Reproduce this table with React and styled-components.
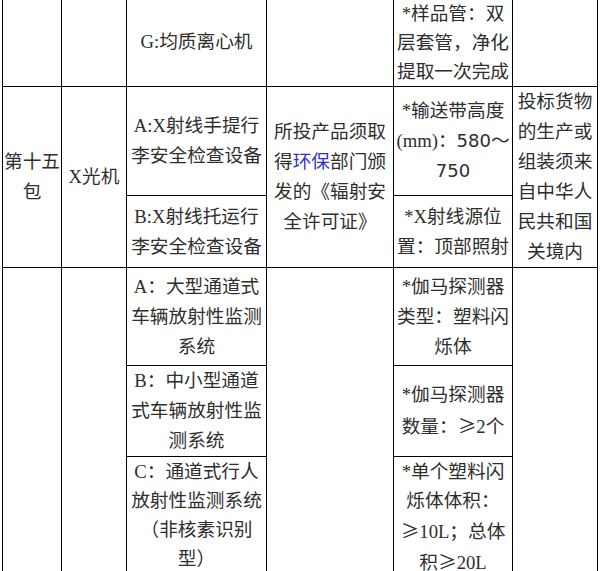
import React from 'react';
import styled, {createGlobalStyle} from 'styled-components';

const GlobalStyle = createGlobalStyle`
  html, body{
    margin: 0;
    padding: 0;
    background-color: #ffffff;
    overflow: hidden;
  }
`;

const Sheet = styled.table`
  border-collapse: collapse;
  table-layout: fixed;
  width: 596px;
  margin: -3px 0 0 2px;
  font-family: "Liberation Serif", "Noto Sans CJK SC", serif;
  font-size: 18.67px;
  line-height: 30px;
  color: #2e2e2e;
`;

const Row = styled.tr`
  height: ${p => p.h}px;
`;

const Cell = styled.td`
  border: 1px solid #000;
  padding: 0 1px;
  text-align: center;
  vertical-align: ${p => p.top ? 'top' : 'middle'};
  white-space: nowrap;
  line-height: ${p => p.lh || 30}px;
`;

const Accent = styled.span`
  color: #3232c8;
`;

const Num = styled.span`
  font-family: "DejaVu Sans", "Noto Sans CJK SC", sans-serif;
  font-size: 18px;
`;

/* 全角的 ≥ */
const Sym = styled.span`
  font-family: "Noto Sans CJK SC", sans-serif;
`;

const widths = [59, 65, 140, 127, 119, 85];

const App = () => {
  return (
    <>
      <GlobalStyle/>
      <Sheet>
        <colgroup>
          {widths.map((w, i) => <col key={i} style={{width: w}}/>)}
        </colgroup>
        <tbody>
          <Row h={89}>
            <Cell/>
            <Cell/>
            <Cell>G:均质离心机</Cell>
            <Cell/>
            <Cell lh={29}>*样品管：双<br/>层套管，净化<br/>提取一次完成</Cell>
            <Cell/>
          </Row>

          {/* 第十五包 */}
          <Row h={109}>
            <Cell rowSpan={2}>第十五<br/>包</Cell>
            <Cell rowSpan={2}>X光机</Cell>
            <Cell>A:X射线手提行<br/>李安全检查设备</Cell>
            <Cell rowSpan={2}>所投产品须取<br/>得<Accent>环保</Accent>部门颁<br/>发的《辐射安<br/>全许可证》</Cell>
            <Cell>*输送带高度<br/>(mm)：<Num>580</Num>～<br/><Num>750</Num></Cell>
            <Cell rowSpan={2}>投标货物<br/>的生产或<br/>组装须来<br/>自中华人<br/>民共和国<br/>关境内</Cell>
          </Row>
          <Row h={72}>
            <Cell>B:X射线托运行<br/>李安全检查设备</Cell>
            <Cell>*X射线源位<br/>置：顶部照射</Cell>
          </Row>

          <Row h={98}>
            <Cell rowSpan={3}/>
            <Cell rowSpan={3}/>
            <Cell>A：大型通道式<br/>车辆放射性监测<br/>系统</Cell>
            <Cell rowSpan={3}/>
            <Cell>*伽马探测器<br/>类型：塑料闪<br/>烁体</Cell>
            <Cell rowSpan={3}/>
          </Row>
          <Row h={90}>
            <Cell>B：中小型通道<br/>式车辆放射性监<br/>测系统</Cell>
            <Cell>*伽马探测器<br/>数量：<Sym>≥</Sym>2个</Cell>
          </Row>
          <Row h={117}>
            <Cell top lh={29}>C：通道式行人<br/>放射性监测系统<br/>（非核素识别<br/>型）</Cell>
            <Cell top lh={29}>*单个塑料闪<br/>烁体体积：<br/><Sym>≥</Sym>10L；总体<br/>积<Sym>≥</Sym>20L</Cell>
          </Row>
        </tbody>
      </Sheet>
    </>
  );
}

export default App;
